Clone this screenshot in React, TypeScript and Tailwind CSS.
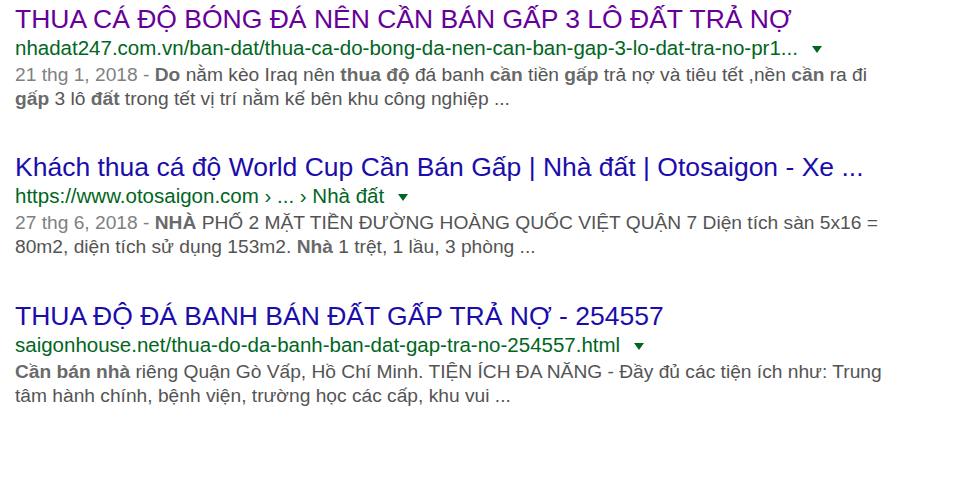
import React from "react";

const Arrow = () => (
  <span className="inline-block align-baseline ml-[14px] mb-[2px] w-0 h-0 border-l-[5px] border-r-[5px] border-t-[7px] border-l-transparent border-r-transparent border-t-[#006621]" />
);

const B = ({ children }: { children: React.ReactNode }) => (
  <b className="font-bold text-[#6a6a6a]">{children}</b>
);

const titleCls = "text-[26.5px] leading-[29px] whitespace-nowrap";
const urlCls = "text-[20.5px] leading-[28px] text-[#006621] whitespace-nowrap";
const snipCls = "mt-[1px] text-[19.2px] leading-[24px] text-[#545454] w-[878px]";

export default function App() {
  return (
    <div
      className="w-[960px] h-[502px] bg-white overflow-hidden pl-[15px] pt-[5px]"
      style={{ fontFamily: '"Liberation Sans", Arial, sans-serif' }}
    >
      <div className="mb-[42px]">
        <div className={`${titleCls} text-[#660099]`}>THUA CÁ ĐỘ BÓNG ĐÁ NÊN CẦN BÁN GẤP 3 LÔ ĐẤT TRẢ NỢ</div>
        <div className={urlCls}>
          nhadat247.com.vn/ban-dat/thua-ca-do-bong-da-nen-can-ban-gap-3-lo-dat-tra-no-pr1...
          <Arrow />
        </div>
        <div className={snipCls}>
          <span className="text-[#808080]">21 thg 1, 2018 - </span>
          <B>Do</B> nằm kèo Iraq nên <B>thua độ</B> đá banh <B>cần</B> tiền <B>gấp</B> trả nợ và tiêu tết ,nền <B>cần</B> ra đi <B>gấp</B> 3 lô <B>đất</B> trong tết vị trí nằm kế bên khu công nghiệp ...
        </div>
      </div>
      <div className="mb-[43px]">
        <div className={`${titleCls} text-[#1a0dab]`}>Khách thua cá độ World Cup Cần Bán Gấp | Nhà đất | Otosaigon - Xe ...</div>
        <div className={urlCls}>
          https://www.otosaigon.com › ... › Nhà đất
          <Arrow />
        </div>
        <div className={snipCls}>
          <span className="text-[#808080]">27 thg 6, 2018 - </span>
          <B>NHÀ</B> PHỐ 2 MẶT TIỀN ĐƯỜNG HOÀNG QUỐC VIỆT QUẬN 7 Diện tích sàn 5x16 = 80m2, diện tích sử dụng 153m2. <B>Nhà</B> 1 trệt, 1 lầu, 3 phòng ...
        </div>
      </div>
      <div>
        <div className={`${titleCls} text-[#1a0dab]`}>THUA ĐỘ ĐÁ BANH BÁN ĐẤT GẤP TRẢ NỢ - 254557</div>
        <div className={urlCls}>
          saigonhouse.net/thua-do-da-banh-ban-dat-gap-tra-no-254557.html
          <Arrow />
        </div>
        <div className={snipCls}>
          <B>Cần bán nhà</B> riêng Quận Gò Vấp, Hồ Chí Minh. TIỆN ÍCH ĐA NĂNG - Đầy đủ các tiện ích như: Trung tâm hành chính, bệnh viện, trường học các cấp, khu vui ...
        </div>
      </div>
    </div>
  );
}
